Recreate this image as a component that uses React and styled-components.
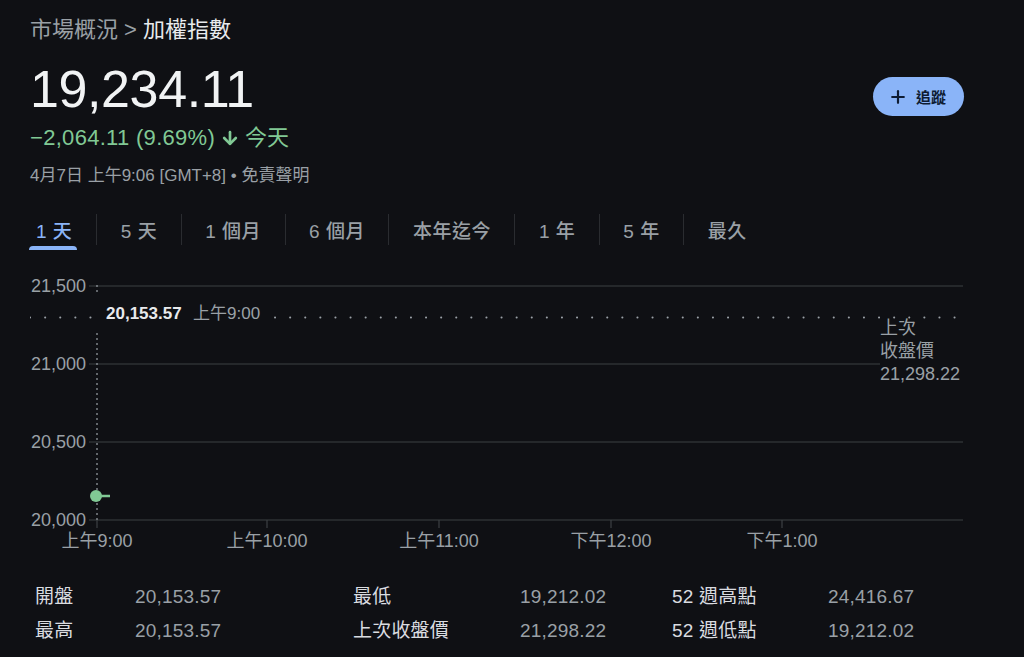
import React from 'react';
import styled, { createGlobalStyle } from 'styled-components';
import { Plus, ArrowDown } from 'lucide-react';

const GlobalStyle = createGlobalStyle`
    html, body {
        margin: 0;
        background: #0f1014;
    }
    body {
        font-family: 'Liberation Sans', Arial, 'Noto Sans CJK TC', sans-serif;
        color: #e8eaed;
    }
`;

const tabs = ['1 天', '5 天', '1 個月', '6 個月', '本年迄今', '1 年', '5 年', '最久'];

const yTicks = [
    { label: '21,500', y: 285 },
    { label: '21,000', y: 363 },
    { label: '20,500', y: 441 },
    { label: '20,000', y: 519 },
];

const xTicks = [
    { label: '上午9:00', x: 97 },
    { label: '上午10:00', x: 267 },
    { label: '上午11:00', x: 439 },
    { label: '下午12:00', x: 611 },
    { label: '下午1:00', x: 782 },
];

const stats = [
    ['開盤', '20,153.57', '最低', '19,212.02', '52 週高點', '24,416.67'],
    ['最高', '20,153.57', '上次收盤價', '21,298.22', '52 週低點', '19,212.02'],
];

export default function App() {
    return (
        <Page>
            <GlobalStyle />
            <Header>
                <TitleBlock>
                    <Breadcrumb>
                        市場概況 &gt; <Current>加權指數</Current>
                    </Breadcrumb>
                    <Price>19,234.11</Price>
                    <Change>
                        <ChangeNum>−2,064.11 (9.69%)</ChangeNum>
                        <ArrowDown size={20} strokeWidth={3.2} />
                        <span>今天</span>
                    </Change>
                    <Meta>4月7日 上午9:06 [GMT+8] • 免責聲明</Meta>
                </TitleBlock>
                <FollowButton>
                    <Plus size={20} strokeWidth={2.6} />
                    追蹤
                </FollowButton>
            </Header>

            <Tabs>
                {tabs.map((t, i) => (
                    <Tab key={t} active={i === 0} first={i === 0}>
                        {t}
                    </Tab>
                ))}
            </Tabs>

            <Chart width="994" height="290" viewBox="30 270 994 290">
                {yTicks.map(t => (
                    <g key={t.label}>
                        <AxisText x="86" y={t.y + 6} textAnchor="end">
                            {t.label}
                        </AxisText>
                        <line
                            x1="89"
                            x2={t.y === 363 ? 880 : 963}
                            y1={t.y}
                            y2={t.y}
                            stroke="#3c4043"
                            strokeWidth="1.2"
                        />
                    </g>
                ))}

                {xTicks.map(t => (
                    <g key={t.label}>
                        <line x1={t.x} x2={t.x} y1="519" y2="527" stroke="#3c4043" strokeWidth="1.2" />
                        <AxisText x={t.x} y="546" textAnchor="middle">
                            {t.label}
                        </AxisText>
                    </g>
                ))}

                <g stroke="#9aa0a6" strokeWidth="2" strokeLinecap="round" strokeDasharray="0.1 15">
                    <line x1="30" x2="98" y1="316.5" y2="316.5" />
                    <line x1="275" x2="963" y1="316.5" y2="316.5" />
                </g>

                <g stroke="#9aa0a6" strokeWidth="1.2" strokeDasharray="2 3">
                    <line x1="97" x2="97" y1="284" y2="293" />
                    <line x1="97" x2="97" y1="332" y2="519" />
                </g>

                <TipValue x="106" y="318">20,153.57</TipValue>
                <TipTime x="193" y="318">上午9:00</TipTime>

                <line x1="96" x2="110" y1="495" y2="495" stroke="#81c995" strokeWidth="2.5" />
                <circle cx="96" cy="495" r="6" fill="#81c995" />

                <AxisText x="880" y="333">上次</AxisText>
                <AxisText x="880" y="356">收盤價</AxisText>
                <AxisText x="880" y="379">21,298.22</AxisText>
            </Chart>

            <Stats>
                {stats.map(row =>
                    row.map((cell, i) => (
                        <StatCell key={row[0] + i} value={i % 2 === 1}>
                            {cell}
                        </StatCell>
                    ))
                )}
            </Stats>
        </Page>
    );
}

const Page = styled.div`
    padding: 16px 0 0 30px;
    width: 994px;
    box-sizing: border-box;
`;

const Header = styled.div`
    display: flex;
    justify-content: space-between;
    align-items: flex-start;
    width: 934px;
`;

const TitleBlock = styled.div`
    display: flex;
    flex-direction: column;
`;

const Breadcrumb = styled.div`
    font-size: 22px;
    line-height: 28px;
    color: #9aa0a6;
`;

const Current = styled.span`
    color: #e8eaed;
`;

const Price = styled.div`
    margin-top: 15px;
    font-size: 52px;
    line-height: 60px;
    letter-spacing: -0.4px;
    color: #f1f3f4;
`;

const Change = styled.div`
    margin-top: 5px;
    display: flex;
    align-items: center;
    gap: 5px;
    font-size: 22px;
    line-height: 28px;
    color: #81c995;
`;

const ChangeNum = styled.span`
    letter-spacing: 0.3px;
`;

const Meta = styled.div`
    margin-top: 13px;
    font-size: 17px;
    line-height: 22px;
    color: #9aa0a6;
`;

const FollowButton = styled.button`
    margin-top: 61px;
    display: flex;
    align-items: center;
    gap: 8px;
    height: 39px;
    padding: 0 18px 0 15px;
    border: none;
    border-radius: 20px;
    background: #8ab4f8;
    color: #0e1c33;
    font-family: inherit;
    font-size: 15px;
    font-weight: 700;
`;

const Tabs = styled.div`
    display: flex;
    margin-top: 27px;
    height: 31px;
`;

const Tab = styled.div`
    position: relative;
    display: flex;
    align-items: center;
    padding: ${({ first }) => (first ? '0 24px 0 6px' : '0 23.5px')};
    border-left: ${({ first }) => (first ? 'none' : '1px solid #2a2c30')};
    font-size: 19px;
    font-weight: 500;
    letter-spacing: 0.5px;
    color: ${({ active }) => (active ? '#8ab4f8' : '#9aa0a6')};

    &::after {
        content: '';
        display: ${({ active }) => (active ? 'block' : 'none')};
        position: absolute;
        left: -1px;
        right: 19px;
        bottom: -5px;
        height: 4px;
        border-radius: 4px 4px 0 0;
        background: #8ab4f8;
    }
`;

const Chart = styled.svg`
    display: block;
    margin-top: 26px;
`;

const AxisText = styled.text`
    font-family: 'Liberation Sans', Arial, 'Noto Sans CJK TC', sans-serif;
    font-size: 18px;
    fill: #9aa0a6;
`;

const TipValue = styled.text`
    font-family: 'Liberation Sans', Arial, sans-serif;
    font-size: 17px;
    font-weight: 700;
    fill: #e8eaed;
`;

const TipTime = styled.text`
    font-family: 'Liberation Sans', Arial, 'Noto Sans CJK TC', sans-serif;
    font-size: 17px;
    fill: #9aa0a6;
`;

const Stats = styled.div`
    display: grid;
    grid-template-columns: 100px 218px 167px 152px 156px auto;
    grid-auto-rows: 34px;
    margin-top: 19px;
    padding-left: 5px;
`;

const StatCell = styled.div`
    font-size: 19px;
    line-height: 34px;
    height: 34px;
    letter-spacing: 0.2px;
    color: ${({ value }) => (value ? '#9aa0a6' : '#dadce0')};
`;
